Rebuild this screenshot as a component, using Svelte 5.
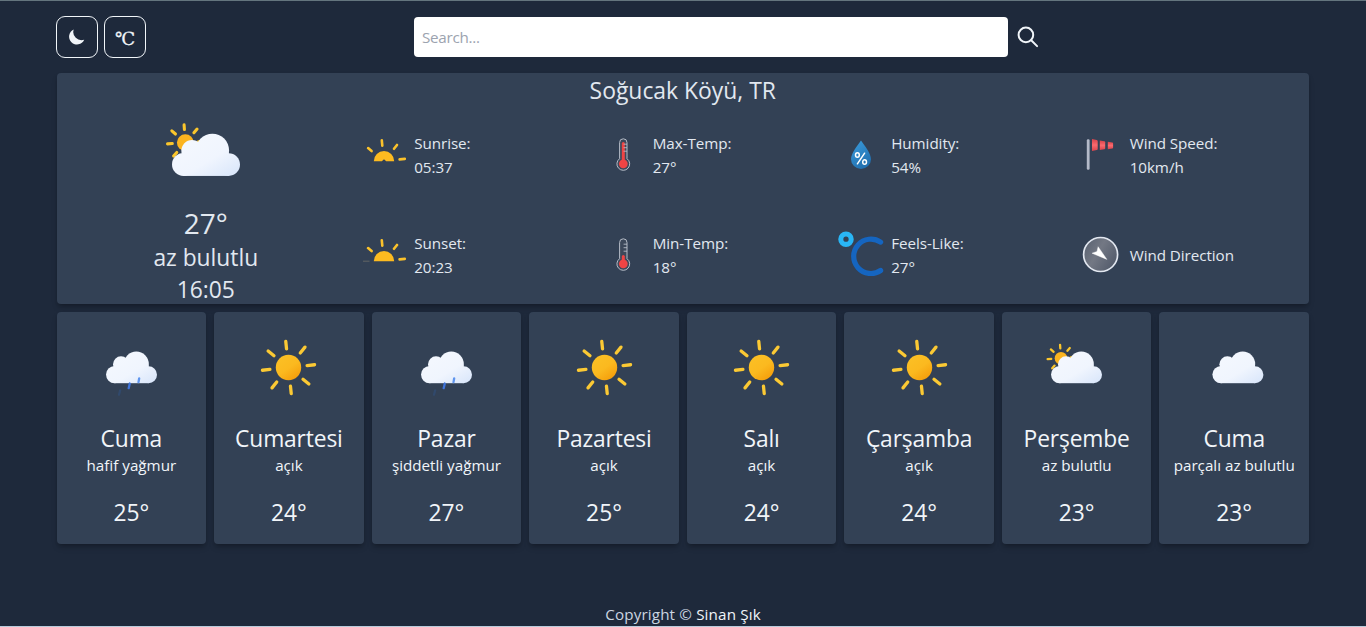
<script>
  const details = [
    { icon: 'sunrise', label: 'Sunrise:', value: '05:37' },
    { icon: 'max', label: 'Max-Temp:', value: '27°' },
    { icon: 'humidity', label: 'Humidity:', value: '54%' },
    { icon: 'sock', label: 'Wind Speed:', value: '10km/h' },
    { icon: 'sunset', label: 'Sunset:', value: '20:23' },
    { icon: 'min', label: 'Min-Temp:', value: '18°' },
    { icon: 'feels', label: 'Feels-Like:', value: '27°' },
    { icon: 'compass', label: 'Wind Direction', value: '' }
  ];
  const days = [
    { day: 'Cuma', text: 'hafif yağmur', temp: '25°', icon: 'rain' },
    { day: 'Cumartesi', text: 'açık', temp: '24°', icon: 'sun' },
    { day: 'Pazar', text: 'şiddetli yağmur', temp: '27°', icon: 'rain' },
    { day: 'Pazartesi', text: 'açık', temp: '25°', icon: 'sun' },
    { day: 'Salı', text: 'açık', temp: '24°', icon: 'sun' },
    { day: 'Çarşamba', text: 'açık', temp: '24°', icon: 'sun' },
    { day: 'Perşembe', text: 'az bulutlu', temp: '23°', icon: 'partly' },
    { day: 'Cuma', text: 'parçalı az bulutlu', temp: '23°', icon: 'cloud' }
  ];
  const rays = [0, 45, 90, 135, 180, 225, 270, 315];
</script>

<svg class="defs" width="0" height="0" aria-hidden="true">
  <defs>
    <linearGradient id="cloudFill" gradientUnits="userSpaceOnUse" x1="-8" y1="-10" x2="10" y2="20">
      <stop offset="0" stop-color="#f3f7fe" />
      <stop offset="0.5" stop-color="#f0f5fe" />
      <stop offset="1" stop-color="#dce8fb" />
    </linearGradient>
    <linearGradient id="sunFill" x1="0.2" y1="0.1" x2="0.8" y2="0.95">
      <stop offset="0" stop-color="#fbbf24" />
      <stop offset="0.5" stop-color="#fbb91f" />
      <stop offset="1" stop-color="#f59e0b" />
    </linearGradient>
    <linearGradient id="dropFill" x1="0" y1="0" x2="0.5" y2="1">
      <stop offset="0" stop-color="#3b9ddd" />
      <stop offset="1" stop-color="#2271b1" />
    </linearGradient>
    <linearGradient id="sockFill" x1="0" y1="0" x2="0" y2="1">
      <stop offset="0" stop-color="#d9434b" />
      <stop offset="0.5" stop-color="#fb6a6e" />
      <stop offset="1" stop-color="#d9434b" />
    </linearGradient>
    <linearGradient id="dialFill" x1="0" y1="0" x2="1" y2="0.6">
      <stop offset="0" stop-color="#555e6e" />
      <stop offset="0.5" stop-color="#737884" />
      <stop offset="1" stop-color="#555d6d" />
    </linearGradient>
  </defs>
</svg>

{#snippet weather(kind)}
  <svg class="weather" viewBox="-37.5 -37.5 75 75" aria-hidden="true">
    {#if kind === 'sun'}
      <circle r="12.7" fill="url(#sunFill)" />
      <g stroke="#fbc934" stroke-width="3.3" stroke-linecap="round">
        {#each rays as a}
          <line y1="-26.2" y2="-18.7" transform="rotate({a - 6})" />
        {/each}
      </g>
    {:else}
      {#if kind === 'partly'}
        <g transform="translate(-15.5 -9.3)">
          <circle r="6.3" fill="#fbb41f" />
          <g stroke="#fbc62c" stroke-width="2.3" stroke-linecap="round">
            {#each rays as a}
              <line y1="-13.4" y2="-9.8" transform="rotate({a - 4})" />
            {/each}
          </g>
        </g>
      {/if}
      <g fill="url(#cloudFill)" transform="translate({kind === 'cloud' ? 3.4 : 0} 0)">
        <circle cx="4.8" cy="-3.5" r="12.5" />
        <circle cx="-10.5" cy="-3.2" r="8" />
        <circle cx="-16.9" cy="7.1" r="8.6" />
        <circle cx="17" cy="7.2" r="8.5" />
        <rect x="-17" y="-3" width="34" height="18.7" />
      </g>
      {#if kind === 'rain'}
        <g stroke-width="2.3" stroke-linecap="round">
          <line x1="-1.7" y1="16" x2="-2.8" y2="20.7" stroke="#3f74dc" />
          <line x1="7.7" y1="10.8" x2="7" y2="14.6" stroke="#5f95ee" />
          <line x1="-11.3" y1="22.8" x2="-12.5" y2="27.2" stroke="#30507f" opacity="0.55" />
        </g>
      {/if}
    {/if}
  </svg>
{/snippet}

{#snippet glyph(kind)}
  <svg class="glyph" viewBox="-30 -30 60 60" aria-hidden="true">
    {#if kind === 'sunrise' || kind === 'sunset'}
      {#if kind === 'sunrise'}
        <path d="M-10.2 6.2a10.2 10.2 0 0 1 20.4 0H2.2L0 4.3-2.2 6.2z" fill="#fdbb20" />
      {:else}
        <path d="M-10.2 6.2a10.2 10.2 0 0 1 20.4 0z" fill="#fdbb20" />
        <path d="M-21 6.2h6.5" stroke="#77756a" stroke-width="0.7" />
      {/if}
      <path
        d="M-2.2-14.6l.5 5.2M-15.9-6.9l3.5 3M13-10l-3 3.8M15.6 4.4l5.2-.5"
        fill="none"
        stroke="#fbc22b"
        stroke-width="2.6"
        stroke-linecap="round"
      />
    {:else if kind === 'max' || kind === 'min'}
      <path
        d="M-3.4 3.7v-16.2a3.7 3.7 0 0 1 7.4 0v16.2a6.4 6.4 0 1 1-7.4 0z"
        fill="#46505f"
        fill-opacity="0.5"
        stroke="#b5bcc7"
        stroke-width="1"
      />
      <circle cx=".3" cy="8.8" r="4.4" fill="#ef4444" />
      <line
        x1=".3"
        x2=".3"
        y1={kind === 'max' ? -11.5 : 1.5}
        y2="8"
        stroke="#ef4444"
        stroke-width="3"
        stroke-linecap="round"
      />
      <path d="M.6-10.8H4M.6-7.3H4M.6-3.8H4" stroke="#b5bcc7" stroke-width=".9" />
    {:else if kind === 'humidity'}
      <path d="M0-14.5C-3.5-9.5-10-1.5-10 4.2a10 9.7 0 0 0 20 0C10-1.5 3.5-9.5 0-14.5z" fill="url(#dropFill)" />
      <g fill="none" stroke="#fff" stroke-width="1.5">
        <ellipse cx="-3.6" cy="0" rx="1.9" ry="2.3" />
        <ellipse cx="3.6" cy="7" rx="1.9" ry="2.3" />
        <path d="M3.6-1.8l-7.2 10.6" stroke-linecap="round" />
      </g>
    {:else if kind === 'feels'}
      <circle cx="-15" cy="-15.8" r="5.2" fill="none" stroke="#29b6f6" stroke-width="5.1" />
      <path
        d="M19.6-12.9A17.2 17.2 0 1 0 19.6 15.5"
        fill="none"
        stroke="#1565c0"
        stroke-width="5.2"
        stroke-linecap="round"
      />
    {:else if kind === 'sock'}
      <rect x="-13.2" y="-15.8" width="2.8" height="30.6" rx="1.2" fill="#b4bac9" />
      <g fill="url(#sockFill)">
        <path d="M-8-16l4.8.9q.9.2.9 1.1v7.9q0 .9-.9 1.1L-8-3.9z" />
        <path d="M-.2-14.5l4.6.8q.8.2.8 1v6q0 .8-.8 1l-4.6.8z" />
        <path d="M7.8-13.2l4.6.7q.7.1.7.9v4.2q0 .8-.7.9l-4.6.7z" />
      </g>
    {:else}
      <circle cx=".6" cy="-.5" r="17" fill="url(#dialFill)" stroke="#e3e8f1" stroke-width="1.7" />
      <path d="M6.9 4.4L-1.9-8.3-3-3.5-8-1.8z" fill="#fff" stroke="#fff" stroke-width=".4" stroke-linejoin="round" />
    {/if}
  </svg>
{/snippet}

<div class="page">
  <header>
    <div class="toggles">
      <button aria-label="Dark mode">
        <svg width="16" height="16" viewBox="0 0 16 16">
          <path d="M4.7.4A8.3 8.3 0 0 0 15.2 10.8 7.9 7.9 0 1 1 4.7.4z" fill="#f1f5f9" />
        </svg>
      </button>
      <button class="unit">℃</button>
    </div>
    <div class="search">
      <input type="text" placeholder="Search..." />
      <svg width="22" height="22" viewBox="0 0 22 22" fill="none" stroke="#f1f5f9" stroke-width="2" stroke-linecap="round">
        <circle cx="8.9" cy="8.9" r="7.3" />
        <path d="M14.2 14.2l5.9 5.9" />
      </svg>
    </div>
  </header>

  <main>
    <section class="current">
      <h1>Soğucak Köyü, TR</h1>
      <div class="body">
        <div class="now">
          {@render weather('partly')}
          <div class="deg">27°</div>
          <div class="line">az bulutlu</div>
          <div class="line">16:05</div>
        </div>
        <div class="details">
          {#each details as d}
            <div class="detail">
              {@render glyph(d.icon)}
              <div>
                <div>{d.label}</div>
                {#if d.value}<div>{d.value}</div>{/if}
              </div>
            </div>
          {/each}
        </div>
      </div>
    </section>

    <section class="days">
      {#each days as d}
        <article>
          {@render weather(d.icon)}
          <h2>{d.day}</h2>
          <p>{d.text}</p>
          <strong>{d.temp}</strong>
        </article>
      {/each}
    </section>
  </main>

  <footer>Copyright © <span>Sinan Şık</span></footer>
</div>

<style>
  :global(body) {
    margin: 0;
    background: #1e293b;
    overflow: hidden;
  }
  .defs {
    display: block;
  }
  .page {
    box-sizing: border-box;
    height: 627px;
    display: flex;
    flex-direction: column;
    background: #1e293b;
    border-top: 1px solid #64757e;
    border-bottom: 1px solid #b9cbdb;
    color: #e2e8f0;
    font-family: 'Open Sans', 'Noto Sans', sans-serif;
    font-size: 15.2px;
    line-height: 24px;
  }
  header {
    box-sizing: border-box;
    height: 72px;
    padding: 15px 56px 0;
    display: flex;
    align-items: flex-start;
  }
  .toggles {
    display: flex;
    gap: 6px;
    width: 358px;
  }
  button {
    box-sizing: border-box;
    width: 42px;
    height: 42px;
    padding: 0;
    display: flex;
    align-items: center;
    justify-content: center;
    border: 1px solid #f1f5f9;
    border-radius: 9px;
    background: transparent;
    color: #f1f5f9;
  }
  .unit {
    padding-top: 2px;
    font-family: 'DejaVu Serif', serif;
    font-size: 18px;
    -webkit-text-stroke: 0.3px #f1f5f9;
  }
  .search {
    display: flex;
    align-items: center;
    gap: 9px;
    padding-top: 1px;
  }
  input {
    box-sizing: border-box;
    width: 594px;
    height: 40px;
    padding: 0 8px;
    border: 0;
    border-radius: 4px;
    background: #fff;
    font: inherit;
    letter-spacing: -0.25px;
  }
  input::placeholder {
    color: #9ca3af;
    opacity: 1;
  }
  main {
    padding: 0 57px 0 56.6px;
    display: flex;
    flex-direction: column;
    gap: 8px;
  }
  .current,
  article {
    background: #334155;
    border-radius: 4px;
    box-shadow: 0 4px 6px -1px rgba(0, 0, 0, 0.22), 0 2px 4px -2px rgba(0, 0, 0, 0.22);
  }
  .current {
    height: 231px;
  }
  h1,
  h2,
  p,
  strong {
    margin: 0;
    font-weight: 400;
  }
  h1 {
    font-size: 22.9px;
    line-height: 36px;
    height: 32px;
    text-align: center;
  }
  .body {
    display: flex;
    padding: 0 30px;
  }
  .now {
    width: 238.4px;
    flex: none;
    display: flex;
    flex-direction: column;
    align-items: center;
  }
  .now .weather {
    width: 100px;
    height: 100px;
  }
  .deg {
    font-size: 28px;
    line-height: 37px;
  }
  .line {
    font-size: 22.8px;
    line-height: 32px;
  }
  .details {
    flex: 1;
    display: grid;
    grid-template-columns: repeat(4, 1fr);
    grid-auto-rows: 100px;
  }
  .detail {
    display: flex;
    align-items: center;
    padding-left: 29.2px;
    white-space: nowrap;
    letter-spacing: -0.05px;
  }
  .glyph {
    width: 60px;
    height: 60px;
    flex: none;
  }
  .days {
    display: grid;
    grid-template-columns: repeat(8, 1fr);
    gap: 8px;
  }
  article {
    box-sizing: border-box;
    height: 232px;
    padding-top: 17.5px;
    display: flex;
    flex-direction: column;
    align-items: center;
    color: #f1f5f9;
    white-space: nowrap;
  }
  article .weather {
    width: 75px;
    height: 75px;
  }
  h2 {
    margin-top: 18.5px;
    font-size: 22.8px;
    line-height: 32px;
    letter-spacing: -0.15px;
  }
  p {
    margin-top: -2px;
  }
  strong {
    margin-top: 20px;
    font-size: 22.8px;
    line-height: 32px;
  }
  footer {
    margin-top: auto;
    text-align: center;
    color: #cbd5e1;
    letter-spacing: 0.15px;
  }
  footer span {
    color: #f1f5f9;
  }
</style>
